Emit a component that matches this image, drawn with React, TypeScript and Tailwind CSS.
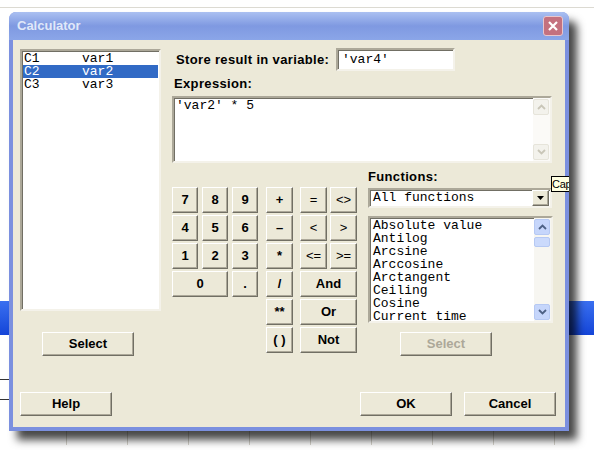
import clsx from "clsx";
import type { ReactNode } from "react";

const raised =
  "flex items-center justify-center border border-t-white border-l-white border-r-[#716f64] border-b-[#716f64] bg-[#ece9d8] shadow-[inset_-1px_-1px_0_#aca899] text-[13px] font-bold";
const sunken =
  "border-2 border-t-[#aca899] border-l-[#aca899] border-r-[#f4f2ea] border-b-[#f4f2ea] shadow-[inset_1px_1px_0_#716f64] bg-white";

const Btn = ({
  children,
  className,
  disabled,
}: {
  children: ReactNode;
  className?: string;
  disabled?: boolean;
}) => (
  <div className={clsx(raised, disabled ? "text-[#aca899]" : "text-black", className)}>
    {children}
  </div>
);

const Chevron = ({ up, color }: { up?: boolean; color: string }) => (
  <svg width="9" height="6" viewBox="0 0 9 6">
    <polyline
      points={up ? "1,5 4.5,1.5 8,5" : "1,1 4.5,4.5 8,1"}
      fill="none"
      stroke={color}
      strokeWidth="1.8"
    />
  </svg>
);

const functions = [
  "Absolute value",
  "Antilog",
  "Arcsine",
  "Arccosine",
  "Arctangent",
  "Ceiling",
  "Cosine",
  "Current time",
];

const columns = [
  ["C1", "var1"],
  ["C2", "var2"],
  ["C3", "var3"],
];

const Keypad = () => (
  <div className="flex mt-[24px]">
    <div className="grid grid-cols-[26px_26px_26px] auto-rows-[26px] gap-x-[4px] gap-y-[2px]">
      {["7", "8", "9", "4", "5", "6", "1", "2", "3"].map((k) => (
        <Btn key={k}>{k}</Btn>
      ))}
      <Btn className="col-span-2">0</Btn>
      <Btn>.</Btn>
    </div>
    <div className="grid grid-cols-[27px] auto-rows-[26px] gap-y-[2px] ml-[8px]">
      {["+", "–", "*", "/", "**", "( )"].map((k) => (
        <Btn key={k}>{k}</Btn>
      ))}
    </div>
    <div className="grid grid-cols-[27px_27px] auto-rows-[26px] gap-x-[3px] gap-y-[2px] ml-[7px]">
      {["=", "<>", "<", ">", "<=", ">="].map((k) => (
        <Btn key={k} className="font-normal">
          {k}
        </Btn>
      ))}
      <Btn className="col-span-2">And</Btn>
      <Btn className="col-span-2">Or</Btn>
      <Btn className="col-span-2">Not</Btn>
    </div>
  </div>
);

export default function App() {
  return (
    <div className="relative w-[594px] h-[456px] overflow-hidden bg-white pl-[9px] pt-[12px] font-['Liberation_Sans',Arial,sans-serif]">
      {/* worksheet behind the dialog */}
      <div className="absolute left-0 right-0 top-[7px] h-px bg-[#dcdad2]" />
      <div className="absolute left-0 right-0 top-[301px] h-[34px] bg-gradient-to-b from-[#3a6ff0] to-[#1444d8]" />
      <div className="absolute left-0 w-[9px] top-[379px] h-px bg-[#333]" />
      <div className="absolute left-0 w-[9px] top-[399px] h-px bg-[#333]" />
      <div className="absolute left-0 right-0 top-[431px] h-[14px]">
        {[66, 127, 188, 249, 310, 371, 432, 493, 554].map((x) => (
          <div key={x} className="absolute top-0 bottom-0 w-px bg-[#d6d4cc]" style={{ left: x }} />
        ))}
      </div>

      <div className="relative flex flex-col w-[560px] h-[419px] rounded-t-[7px] bg-[#7b90df] shadow-[8px_9px_9px_rgba(0,0,0,0.72)]">
        <div className="h-[28px] flex items-center pl-[8px] pr-[6px] rounded-t-[7px] bg-gradient-to-b from-[#abc0f1] via-[#7f99e1] to-[#8ba6e8]">
          <span className="text-[13px] font-bold text-[#e0e8f9]">Calculator</span>
          <div className="ml-auto w-[20px] h-[20px] rounded-[3px] border border-[#e8c6cc] bg-[#c4717f] flex items-center justify-center">
            <svg width="12" height="12" viewBox="0 0 12 12">
              <path d="M2 2 L10 10 M10 2 L2 10" stroke="white" strokeWidth="2.2" />
            </svg>
          </div>
        </div>

        <div className="flex-1 mx-[4px] mb-[4px] bg-[#ece9d8] pt-[8px] pl-[7px]">
          <div className="flex">
            {/* column list */}
            <div className="w-[141px]">
              <div className={clsx(sunken, "mt-[1px] h-[262px] p-px font-['Liberation_Mono',monospace] text-[13px] leading-[13px]")}>
                {columns.map(([c, v]) => (
                  <div
                    key={c}
                    className={clsx("flex h-[13px] pl-[1px]", c === "C2" ? "bg-[#316ac5] text-white" : "text-black")}
                  >
                    <span className="w-[58px]">{c}</span>
                    <span>{v}</span>
                  </div>
                ))}
              </div>
              <Btn className="mt-[21px] ml-[22px] w-[92px] h-[24px]">Select</Btn>
            </div>

            <div className="ml-[11px]">
              <div className="flex items-center h-[23px]">
                <span className="w-[164px] pl-[4px] text-[13px] font-bold tracking-[0.35px]">
                  Store result in variable:
                </span>
                <div className={clsx(sunken, "w-[119px] h-[23px] flex items-center pl-[4px] font-['Liberation_Mono',monospace] text-[13px]")}>
                  'var4'
                </div>
              </div>
              <div className="mt-[5px] ml-[2px] text-[13px] leading-[16px] font-bold tracking-[0.35px]">Expression:</div>
              <div className={clsx(sunken, "mt-[4px] w-[380px] h-[67px] flex")}>
                <div className="flex-1 pl-[2px] pt-px font-['Liberation_Mono',monospace] text-[13px] leading-[14px]">
                  'var2' * 5
                </div>
                <div className="w-[17px] flex flex-col bg-[#fbfaf7] py-px pr-px">
                  <div className="h-[16px] rounded-[2px] border border-[#e6e4da] bg-[#f3f2ec] flex items-center justify-center">
                    <Chevron up color="#c9c6b8" />
                  </div>
                  <div className="flex-1" />
                  <div className="h-[16px] rounded-[2px] border border-[#e6e4da] bg-[#f3f2ec] flex items-center justify-center">
                    <Chevron color="#c9c6b8" />
                  </div>
                </div>
              </div>

              <div className="flex items-start">
                <Keypad />

                <div className="ml-[11px] mt-[6px]">
                  <div className="text-[13px] leading-[16px] font-bold tracking-[0.35px]">Functions:</div>
                  <div className={clsx(sunken, "mt-[3px] w-[184px] h-[20px] flex items-center")}>
                    <span className="flex-1 pl-[3px] font-['Liberation_Mono',monospace] text-[13px]">All functions</span>
                    <div className={clsx(raised, "w-[17px] h-[16px] mr-px")}>
                      <svg width="7" height="4" viewBox="0 0 7 4">
                        <polygon points="0,0 7,0 3.5,4" fill="black" />
                      </svg>
                    </div>
                  </div>
                  <div className={clsx(sunken, "mt-[8px] w-[185px] h-[107px] flex")}>
                    <div className="flex-1 pl-[3px] pt-px font-['Liberation_Mono',monospace] text-[13px] leading-[13px] overflow-hidden">
                      {functions.map((f) => (
                        <div key={f} className="h-[13px] whitespace-pre">
                          {f}
                        </div>
                      ))}
                    </div>
                    <div className="w-[17px] flex flex-col bg-[#f7f6f1] py-px pr-px">
                      <div className="h-[16px] rounded-[2px] border border-[#b6c9f3] bg-[#c6d6fb] flex items-center justify-center">
                        <Chevron up color="#4d6185" />
                      </div>
                      <div className="mt-[2px] h-[10px] rounded-[2px] border border-[#b6c9f3] bg-[#cbdafc]" />
                      <div className="flex-1" />
                      <div className="h-[16px] rounded-[2px] border border-[#b6c9f3] bg-[#c6d6fb] flex items-center justify-center">
                        <Chevron color="#4d6185" />
                      </div>
                    </div>
                  </div>
                  <Btn disabled className="mt-[9px] ml-[32px] w-[92px] h-[24px]">
                    Select
                  </Btn>
                </div>
              </div>
            </div>
          </div>

          <div className="flex mt-[36px]">
            <Btn className="w-[92px] h-[24px]">Help</Btn>
            <Btn className="ml-[248px] w-[92px] h-[24px]">OK</Btn>
            <Btn className="ml-[12px] w-[92px] h-[24px]">Cancel</Btn>
          </div>
        </div>

        {/* tooltip peeking in from the right */}
        <div className="absolute left-[542px] top-[164px] w-[18px] h-[16px] overflow-hidden border-y border-l border-black bg-[#ffffe1] text-[11px] leading-[14px] tracking-[-0.3px]">
          Cap
        </div>
      </div>
    </div>
  );
}
